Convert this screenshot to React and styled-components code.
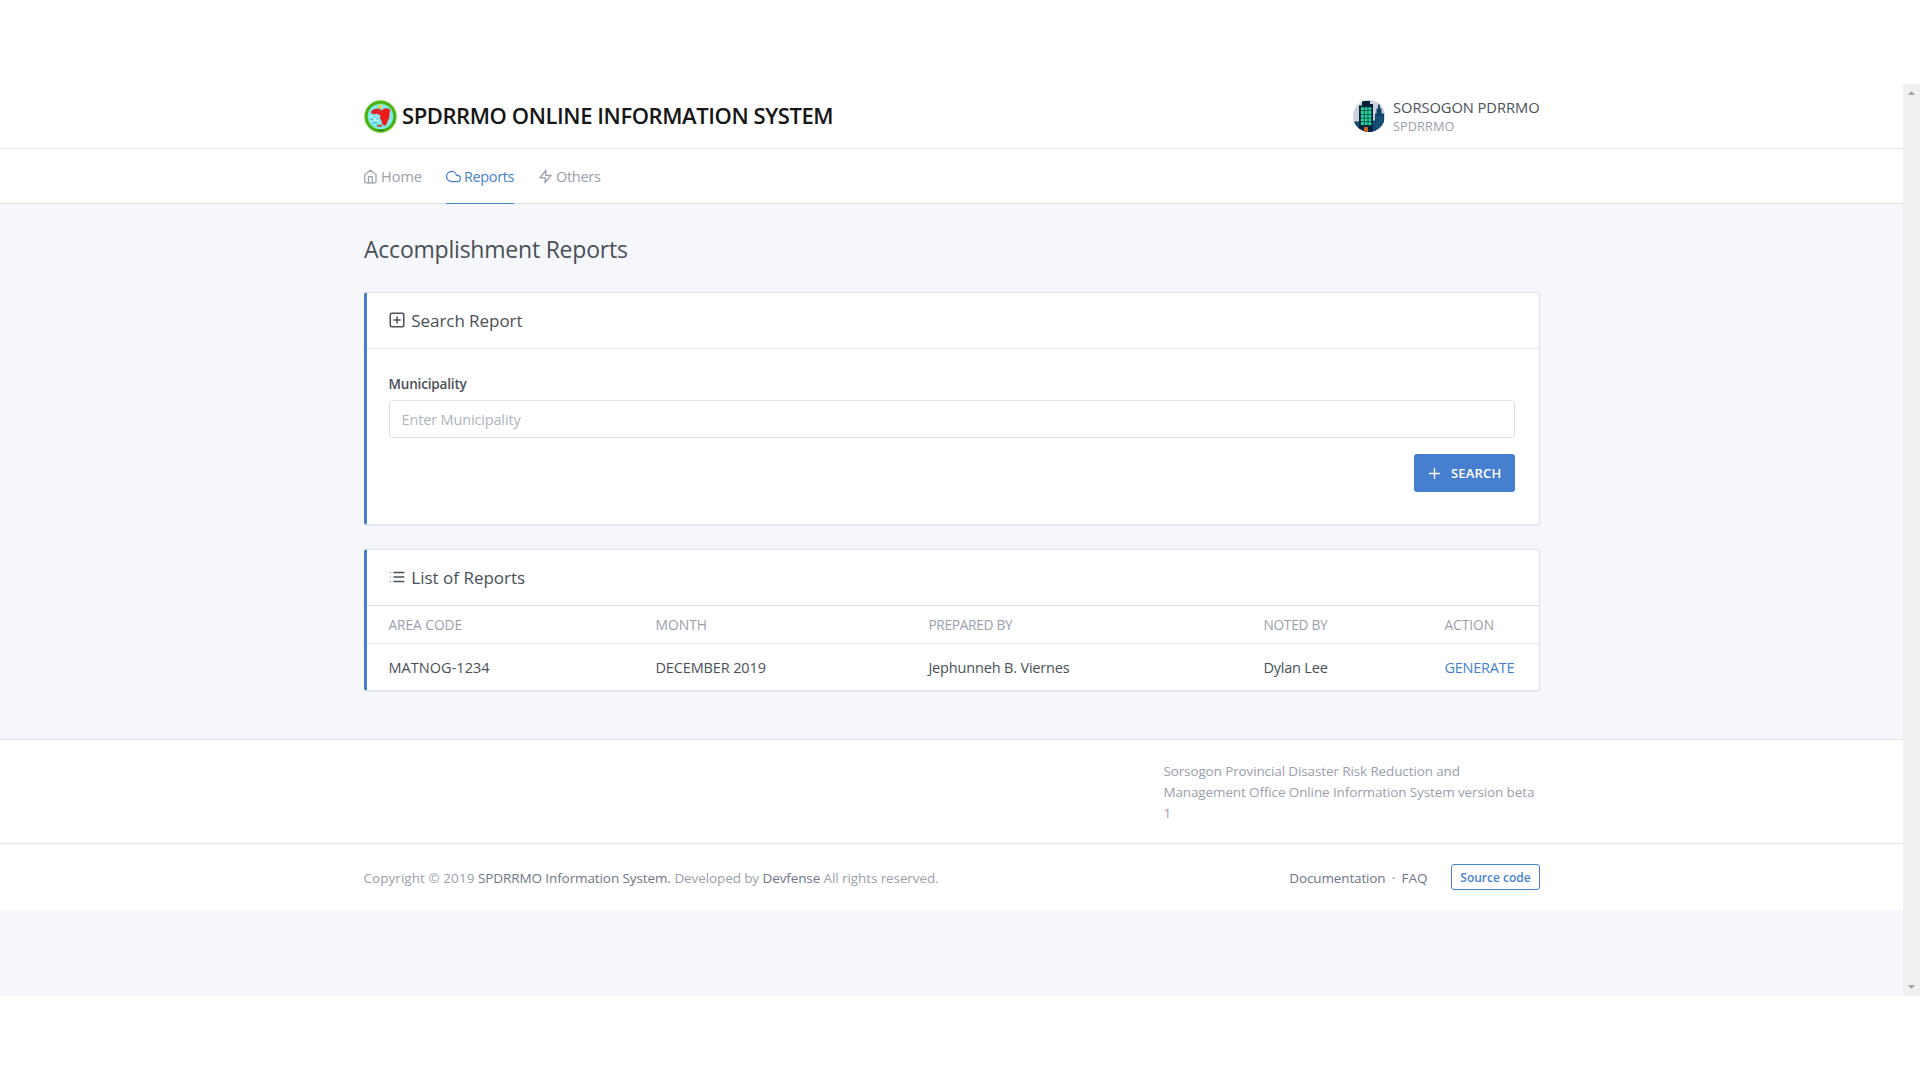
import React from 'react';
import styled, { createGlobalStyle } from 'styled-components';

const Global = createGlobalStyle`
  *, *::before, *::after { box-sizing: border-box; }
  body {
    margin: 0;
    background: #fff;
    color: #495057;
    font: 400 14.5px/1.5 "Open Sans", "Noto Sans", sans-serif;
  }
  button, input { font: inherit; }
  a { color: inherit; text-decoration: none; }
  svg { display: block; flex: none; }
`;

const Screen = styled.div`
  height: 1080px;
  padding: 84px 0;
  overflow: hidden;
`;
const Browser = styled.div`
  display: flex;
  height: 912px;
  background: #f5f7fb;
`;
const Page = styled.div`
  flex: 1;
  min-width: 0;
`;
const Scrollbar = styled.div`
  width: 17px;
  background: #f0f0f0;
  display: flex;
  flex-direction: column;
  justify-content: space-between;
  align-items: center;
  padding: 7px 0;
`;
const Container = styled.div`
  width: 1176px;
  margin-left: 364px;
`;
const Text = styled.span`
  font-size: ${(p) => p.$size || 14.5}px;
  letter-spacing: ${(p) => p.$ls || 0}px;
  white-space: nowrap;
`;

const Header = styled.header`
  height: 65px;
  background: #fff;
  border-bottom: 1px solid #dee4ee;
`;
const HeaderRow = styled(Container)`
  height: 64px;
  display: flex;
  align-items: center;
  justify-content: space-between;
`;
const Brand = styled.a`
  display: flex;
  align-items: center;
  gap: 5px;
  color: #161616;
  font-weight: 600;
  line-height: 32px;
  span { padding-bottom: 2px; }
`;
const User = styled.a`
  display: flex;
  align-items: center;
  gap: 8px;
  width: 187px;
`;
const UserText = styled.span`
  display: flex;
  flex-direction: column;
`;
const UserName = styled(Text)`
  line-height: 19px;
`;
const UserRole = styled(Text)`
  line-height: 18px;
  color: #9aa0ac;
`;

const Nav = styled.nav`
  height: 55px;
  background: #fff;
  border-bottom: 1px solid #dee2e6;
`;
const Tabs = styled(Container)`
  display: flex;
  gap: 24px;
`;
const Tab = styled.a`
  display: flex;
  align-items: center;
  gap: 3px;
  width: ${(p) => p.$width}px;
  height: 55px;
  padding-top: 1px;
  color: ${(p) => (p.$active ? '#467fcf' : '#9aa0ac')};
  border-bottom: 1px solid ${(p) => (p.$active ? '#467fcf' : 'transparent')};
`;

const Title = styled.h1`
  margin: 28px 0 25px;
  height: 35px;
  line-height: 34px;
  font-size: 23px;
  font-weight: 400;
  letter-spacing: -0.22px;
`;
const Card = styled.section`
  height: ${(p) => p.$height}px;
  margin-bottom: 24px;
  background: #fff;
  border: 1px solid #dde2ec;
  border-left: 3px solid #467fcf;
  border-radius: 3px;
  box-shadow: 0 1px 2px rgba(0, 0, 0, 0.05);
`;
const CardHeader = styled.div`
  height: 56px;
  padding-left: 21.3px;
  display: flex;
  align-items: center;
  gap: 5px;
  border-bottom: 1px solid #dde2ec;
  svg { margin-top: -2px; }
`;
const Form = styled.form`
  padding: 25px 24px 0 21.5px;
  display: flex;
  flex-direction: column;
`;
const Label = styled.label`
  height: 21px;
  line-height: 21px;
  margin-bottom: 5px;
  font-size: 13.5px;
  font-weight: 600;
  letter-spacing: -0.17px;
`;
const Input = styled.input`
  height: 38px;
  padding: 0 12px;
  border: 1px solid #dde2ec;
  border-radius: 3px;
  letter-spacing: -0.15px;
  &::placeholder { color: #adb5bd; opacity: 1; }
`;
const SearchButton = styled.button`
  align-self: flex-end;
  display: flex;
  align-items: center;
  gap: 8px;
  width: 101px;
  height: 38px;
  margin-top: 16px;
  padding: 0 0 0 12px;
  border: 0;
  border-radius: 3px;
  background: #467fcf;
  color: #fff;
  font-weight: 600;
  span { padding-top: 1px; }
`;

const TableRow = styled.div`
  display: grid;
  grid-template-columns: 267px 273px 335px 181px 1fr;
  align-items: center;
  height: ${(p) => (p.$head ? 38 : 46)}px;
  padding: 2px 0 0 21.4px;
  color: ${(p) => (p.$head ? '#9aa0ac' : '#495057')};
  border-bottom: ${(p) => (p.$head ? '1px solid #dde2ec' : '0')};
`;
const ActionLink = styled(Text)`
  && { color: #467fcf; }
`;

const Info = styled.div`
  height: 104px;
  margin-top: 48px;
  padding-top: 21px;
  background: #fff;
  border-top: 1px solid #dde2ec;
  color: #9aa0ac;
`;
const InfoText = styled.p`
  margin: 0 0 0 799.4px;
  line-height: 21px;
  display: flex;
  flex-direction: column;
`;
const Footer = styled.footer`
  height: 67px;
  background: #fff;
  border-top: 1px solid #dee2e6;
  color: #9aa0ac;
  a { color: #6e7687; }
`;
const FooterRow = styled(Container)`
  height: 66px;
  display: flex;
  align-items: center;
  justify-content: space-between;
`;
const Copyright = styled(Text)`
  padding-top: 2px;
  margin-left: -0.5px;
`;
const FooterLinks = styled.div`
  display: flex;
  align-items: center;
  > a, > i { padding-top: 2px; }
`;
const Dot = styled.i`
  width: 16px;
  text-align: center;
  font-style: normal;
`;
const SourceLink = styled.span`
  width: 89px;
  height: 26px;
  margin-left: 23.5px;
  border: 1px solid #467fcf;
  border-radius: 3px;
  color: #467fcf;
  font-size: 12px;
  font-weight: 600;
  line-height: 25px;
  text-align: center;
`;

const Icon = ({ size = 15, width = 2, children }) => (
  <svg width={size} height={size} viewBox="0 0 24 24" fill="none" stroke="currentColor"
    strokeWidth={width} strokeLinecap="round" strokeLinejoin="round">{children}</svg>
);

const Seal = () => (
  <svg width="33" height="33" viewBox="0 0 33 33">
    <circle cx="16.5" cy="16.5" r="16.2" fill="#62c91e" />
    <circle cx="16.5" cy="16.5" r="14.2" fill="none" stroke="#2f8d20" strokeWidth="1.6" strokeDasharray="1.2 .8" />
    <circle cx="16.5" cy="16.5" r="12.6" fill="#7deaf2" />
    <circle cx="16.3" cy="6.600" r="2" fill="#f0d83c" />
    <path d="M7 11.500l3-2.500 5-.5 2 2.500 3-2.500 4-.2 2.500 2-1 2.500-.2 5-1.500 3-1.500 4-2 1-2-1.500-1-4-1.500-2 .5-3-3.500-1.500-3 .5-2.500-1z" fill="#ef1c1c" />
    <path d="M10 11.500l3 .6 3-1M16 9l2 2" stroke="#a3392e" strokeWidth=".7" fill="none" />
    <path d="M6 17.500l4-2 3 2-3 2 5 2M7 21.500l5-1" stroke="#d5f8ff" strokeWidth="1.1" fill="none" />
    <path d="M6 19l4 1M9 15l5 4M8 23l5-.5" stroke="#3e9fc4" strokeWidth=".8" fill="none" />
    <path d="M12.500 24.800h5.500v2.200h-4.500z" fill="#b06a3a" />
    <path d="M14.500 30.500h5" stroke="#276f20" strokeWidth="1.2" />
  </svg>
);

const Avatar = () => (
  <svg width="32" height="32" viewBox="0 0 32 32">
    <defs><clipPath id="avatar"><circle cx="16" cy="16" r="16" /></clipPath></defs>
    <g clipPath="url(#avatar)">
      <rect width="32" height="32" fill="#cdd2da" />
      <path d="M0 21.500h7v10.500H0zM19 20.500h4v11.500h-4z" fill="#0f4c75" />
      <path d="M22 32V13.500h1.500V8.500h1.500V6l1-3 1 3v2.500h1.500v5H31V32z" fill="#0e416a" />
      <path d="M24 16v14M26.500 16v14M29 16v14" stroke="#2f709a" strokeWidth=".7" />
      <path d="M6 5.500h3V1h8v3h3v28H6z" fill="#04223d" />
      {[7.300, 11, 14.700, 18.400, 22.100].map((y) =>
        [7.900, 11.600, 15.300].map((x) => (
          <rect key={`${x}-${y}`} x={x} y={y} width="3" height="3" fill="#24dc97" />
        )))}
      <rect x="11" y="27" width="4" height="5" fill="#c8691f" />
    </g>
  </svg>
);

const HEAD = [['AREA CODE', 13.7, 0], ['MONTH', 13.9, 0], ['PREPARED BY', 13.7, -0.3], ['NOTED BY', 13.7, -0.25], ['ACTION', 13.7, 0]];
const ROW = [['MATNOG-1234', 14.5, 0.05], ['DECEMBER 2019', 14.5, -0.13], ['Jephunneh B. Viernes', 14.5, -0.17], ['Dylan Lee', 14.5, -0.2]];

export default function App() {
  return (
    <Screen>
      <Global />
      <Browser>
        <Page>
          <Header>
            <HeaderRow>
              <Brand>
                <Seal />
                <Text $size={22} $ls={-0.42}>SPDRRMO ONLINE INFORMATION SYSTEM</Text>
              </Brand>
              <User>
                <Avatar />
                <UserText>
                  <UserName $size={14.7} $ls={-0.05}>SORSOGON PDRRMO</UserName>
                  <UserRole $size={12.7} $ls={0.1}>SPDRRMO</UserRole>
                </UserText>
              </User>
            </HeaderRow>
          </Header>
          <Nav>
            <Tabs>
              <Tab $width={58}>
                <svg width="14" height="15" viewBox="2 0 22 24" fill="none" stroke="currentColor"
                  strokeWidth="2" strokeLinecap="round" strokeLinejoin="round">
                  <path d="M3 9l9-7 9 7v11a2 2 0 0 1-2 2H5a2 2 0 0 1-2-2z" />
                  <path d="M9 22V12h6v10" />
                </svg>
                <Text>Home</Text>
              </Tab>
              <Tab $width={68} $active>
                <Icon><path d="M18 10h-1.260A8 8 0 1 0 9 20h9a5 5 0 0 0 0-10z" /></Icon>
                <Text $ls={-0.38}>Reports</Text>
              </Tab>
              <Tab $width={64}>
                <Icon><path d="M13 2L3 14h9l-1 8 10-12h-9l1-8z" /></Icon>
                <Text $ls={-0.3}>Others</Text>
              </Tab>
            </Tabs>
          </Nav>
          <Container>
            <Title>Accomplishment Reports</Title>
            <Card $height={233}>
              <CardHeader>
                <Icon size={18}>
                  <rect x="3" y="3" width="18" height="18" rx="2" />
                  <path d="M12 8v8M8 12h8" />
                </Icon>
                <Text $size={17} $ls={-0.06}>Search Report</Text>
              </CardHeader>
              <Form>
                <Label htmlFor="municipality">Municipality</Label>
                <Input id="municipality" placeholder="Enter Municipality" />
                <SearchButton type="button">
                  <Icon size={17}><path d="M12 5v14M5 12h14" /></Icon>
                  <Text $size={13} $ls={0.2}>SEARCH</Text>
                </SearchButton>
              </Form>
            </Card>
            <Card $height={142}>
              <CardHeader>
                <Icon size={18}>
                  <path d="M8 6h13M8 12h13M8 18h13" />
                  <path d="M3 6h.01M3 12h.01M3 18h.01" strokeWidth="1.500" />
                </Icon>
                <Text $size={17} $ls={0}>List of Reports</Text>
              </CardHeader>
              <TableRow $head>
                {HEAD.map(([t, s, l]) => <Text key={t} $size={s} $ls={l}>{t}</Text>)}
              </TableRow>
              <TableRow>
                {ROW.map(([t, s, l]) => <Text key={t} $size={s} $ls={l}>{t}</Text>)}
                <ActionLink as="a" $ls={-0.24}>GENERATE</ActionLink>
              </TableRow>
            </Card>
          </Container>
          <Info>
            <Container>
              <InfoText>
                <Text $size={13.5} $ls={-0.12}>Sorsogon Provincial Disaster Risk Reduction and</Text>
                <Text $size={13.5} $ls={-0.12}>Management Office Online Information System version beta</Text>
                <Text $size={13.5}>1</Text>
              </InfoText>
            </Container>
          </Info>
          <Footer>
            <FooterRow>
              <Copyright $size={13.5} $ls={0.05}>
                Copyright © 2019 <Text as="a" $size={13.5} $ls={-0.1}>SPDRRMO Information System.</Text> <Text $size={13.5} $ls={-0.1}>Developed by <a>Devfense</a> All rights reserved.</Text>
              </Copyright>
              <FooterLinks>
                <Text as="a" $size={13.5} $ls={-0.14}>Documentation</Text>
                <Dot>·</Dot>
                <Text as="a" $size={13.5}>FAQ</Text>
                <SourceLink>Source code</SourceLink>
              </FooterLinks>
            </FooterRow>
          </Footer>
        </Page>
        <Scrollbar>
          <svg width="7" height="4" viewBox="0 0 7 4"><path d="M0 4L3.500 0 7 4z" fill="#a3a3a3" /></svg>
          <svg width="7" height="4" viewBox="0 0 7 4"><path d="M0 0h7L3.500 4z" fill="#a3a3a3" /></svg>
        </Scrollbar>
      </Browser>
    </Screen>
  );
}
